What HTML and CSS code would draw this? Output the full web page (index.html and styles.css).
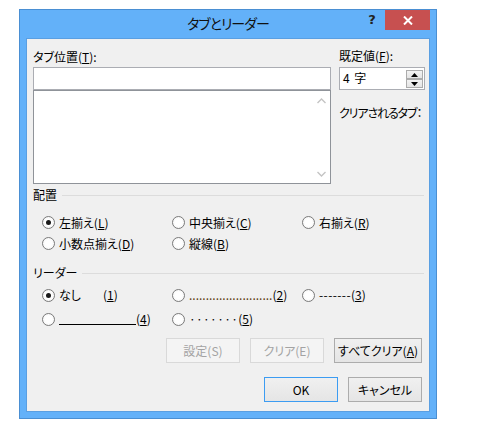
FILE: index.html
```html
<!DOCTYPE html>
<html lang="ja">
<head>
<meta charset="utf-8">
<title>タブとリーダー</title>
<link rel="stylesheet" href="styles.css">
</head>
<body>
<div class="dialog">
  <div class="titlebar">
    <div></div>
    <div class="title">タブとリーダー</div>
    <div class="controls">
      <div class="help">?</div>
      <div class="close">
        <svg width="10" height="9" viewBox="0 0 10 9"><path d="M1 0.5 L9 8.5 M9 0.5 L1 8.5" stroke="#fff" stroke-width="2" fill="none"/></svg>
      </div>
    </div>
  </div>
  <div class="client">
    <div class="top">
      <div class="left-col">
        <div class="label">タブ位置(<u>T</u>):</div>
        <div class="input"></div>
        <div class="list">
          <div class="scrollbar">
            <svg width="9" height="6" viewBox="0 0 9 6"><path d="M0.5 5 L4.5 1 L8.5 5" stroke="#c4c4c4" stroke-width="1.4" fill="none"/></svg>
            <svg width="9" height="6" viewBox="0 0 9 6"><path d="M0.5 1 L4.5 5 L8.5 1" stroke="#c4c4c4" stroke-width="1.4" fill="none"/></svg>
          </div>
        </div>
      </div>
      <div class="right-col">
        <div class="label">既定値(<u>F</u>):</div>
        <div class="spin">
          <span class="spin-value">4 字</span>
          <div class="spin-btns">
            <div class="spin-btn"><svg width="7" height="4" viewBox="0 0 7 4"><path d="M0 4 L3.5 0 L7 4 Z" fill="#000"/></svg></div>
            <div class="spin-btn"><svg width="7" height="4" viewBox="0 0 7 4"><path d="M0 0 L3.5 4 L7 0 Z" fill="#000"/></svg></div>
          </div>
        </div>
        <div class="clear-label">クリアされるタブ：</div>
      </div>
    </div>

    <div class="group-head head-align"><span>配置</span><div class="rule"></div></div>
    <div class="radio-grid align-grid">
      <div class="opt"><span class="radio on"></span><span>左揃え(<u>L</u>)</span></div>
      <div class="opt"><span class="radio"></span><span>中央揃え(<u>C</u>)</span></div>
      <div class="opt"><span class="radio"></span><span>右揃え(<u>R</u>)</span></div>
      <div class="opt"><span class="radio"></span><span>小数点揃え(<u>D</u>)</span></div>
      <div class="opt"><span class="radio"></span><span>縦線(<u>B</u>)</span></div>
    </div>

    <div class="group-head head-leader"><span>リーダー</span><div class="rule"></div></div>
    <div class="radio-grid leader-grid">
      <div class="opt"><span class="radio on"></span><span class="txt">なし<span class="num1">(<u>1</u>)</span></span></div>
      <div class="opt"><span class="radio"></span><span class="txt"><span class="dots">.........................</span>(<u>2</u>)</span></div>
      <div class="opt"><span class="radio"></span><span class="txt"><span class="dashes">-------</span>(<u>3</u>)</span></div>
      <div class="opt"><span class="radio"></span><span class="txt"><span class="line"></span>(<u>4</u>)</span></div>
      <div class="opt"><span class="radio"></span><span class="txt"><span class="mdots">·······</span>(<u>5</u>)</span></div>
    </div>

    <div class="btn-row row1">
      <div class="btn disabled">設定(S)</div>
      <div class="btn disabled">クリア(E)</div>
      <div class="btn wide">すべてクリア(<u>A</u>)</div>
    </div>
    <div class="btn-row row2">
      <div class="btn default">OK</div>
      <div class="btn">キャンセル</div>
    </div>
  </div>
</div>
</body>
</html>
```
FILE: styles.css
```css
* { box-sizing: border-box; }
html, body { margin: 0; padding: 0; background: #fff; }
body {
  font-family: "Noto Sans CJK JP", "Noto Sans", sans-serif;
  font-size: 12px;
  color: #000;
  font-feature-settings: "palt";
}
u { text-decoration: underline; text-underline-offset: 1px; }

.dialog {
  margin: 9px 0 0 19px;
  width: 418px;
  height: 410px;
  border: 1px solid #4a8fd3;
  background: #63b1f9;
  padding: 0 6px 6px 6px;
  display: flex;
  flex-direction: column;
}

.titlebar {
  height: 28px;
  margin: 0 -6px;
  display: grid;
  grid-template-columns: 1fr auto 1fr;
  align-items: start;
}
.title {
  font-size: 14px;
  line-height: 26px;
  color: #111;
  white-space: nowrap;
  letter-spacing: -1px;
}
.controls {
  justify-self: end;
  display: flex;
  margin-right: 6px;
}
.help {
  width: 26px;
  height: 20px;
  line-height: 20px;
  text-align: center;
  font-family: "DejaVu Sans", sans-serif;
  font-weight: bold;
  font-size: 13px;
  color: #222;
}
.close {
  width: 45px;
  height: 20px;
  background: #c75050;
  display: flex;
  align-items: center;
  justify-content: center;
}

.client {
  flex: 1;
  background: #f0f0f0;
  border: 1px solid #5a9fe2;
  padding: 10px 7px 0 6px;
}

.top {
  display: grid;
  grid-template-columns: 298px 86px;
  column-gap: 8px;
  margin-right: -3px;
}
.label { line-height: 16px; height: 16px; white-space: nowrap; }
.left-col .label { margin-bottom: 2px; }
.right-col .label { margin-bottom: 2px; margin-top: -1px; height: 17px; }
.input {
  height: 23px;
  background: #fff;
  border: 1px solid #abadb3;
}
.list {
  height: 94px;
  background: #fff;
  border: 1px solid #8f9399;
  display: flex;
  justify-content: flex-end;
}
.scrollbar {
  width: 17px;
  display: flex;
  flex-direction: column;
  justify-content: space-between;
  align-items: center;
  padding: 7px 0 6px;
}
.spin {
  height: 23px;
  background: #fff;
  border: 1px solid #abadb3;
  display: flex;
  align-items: flex-start;
}
.spin-value { padding-left: 3px; line-height: 20px; word-spacing: 2px; }
.spin-btns {
  margin: 2px 1px 0 auto;
  display: flex;
  flex-direction: column;
}
.spin-btn {
  width: 17px;
  height: 9px;
  border: 1px solid #acacac;
  background: linear-gradient(#f3f3f3, #e4e4e4);
  display: flex;
  align-items: center;
  justify-content: center;
}
.clear-label {
  margin-top: 15px;
  line-height: 16px;
  white-space: nowrap;
  letter-spacing: -1.1px;
}

.group-head {
  display: flex;
  align-items: center;
  gap: 5px;
  line-height: 16px;
  margin-right: -2px;
}
.group-head .rule { flex: 1; height: 1px; background: #dcdcdc; }
.head-align { margin-top: 3px; }
.head-leader { margin-top: 11px; }

.radio-grid {
  display: grid;
  grid-template-columns: 130px 130px 1fr;
  padding-left: 9px;
}
.align-grid { margin-top: 9px; grid-auto-rows: 21px; }
.leader-grid { margin-top: 2px; grid-auto-rows: 24px; }
.opt {
  display: flex;
  align-items: center;
  gap: 4px;
  white-space: nowrap;
  line-height: 16px;
}
.radio {
  width: 13px;
  height: 13px;
  flex: none;
  border-radius: 50%;
  border: 1px solid #7a7a7a;
  background: radial-gradient(circle, #ffffff 40%, #f0f0f0 100%);
  display: flex;
  align-items: center;
  justify-content: center;
}
.radio.on::after {
  content: "";
  width: 5px;
  height: 5px;
  border-radius: 50%;
  background: #1a1a1a;
}
.txt { white-space: nowrap; }
.num1 { margin-left: 22px; }
.dots {
  color: #5c3a12;
  letter-spacing: 0;
}
.dashes { letter-spacing: 0.4px; }
.line {
  display: inline-block;
  width: 77px;
  height: 12px;
  border-bottom: 1px solid #000;
  vertical-align: -1px;
}
.mdots { letter-spacing: 0.3px; }

.btn-row {
  display: flex;
  justify-content: flex-end;
  gap: 10px;
}
.row1 { margin-top: 7px; }
.row2 { margin-top: 14px; }
.btn {
  width: 74px;
  height: 25px;
  border: 1px solid #acacac;
  background: linear-gradient(#f0f0f0, #e5e5e5);
  display: flex;
  align-items: center;
  justify-content: center;
  white-space: nowrap;
  line-height: 16px;
}
.btn.wide { width: 88px; }
.btn.disabled {
  border-color: #d9d9d9;
  background: #f4f4f4;
  color: #a3a3a3;
}
.btn.default { border-color: #3c9cf2; }
```
